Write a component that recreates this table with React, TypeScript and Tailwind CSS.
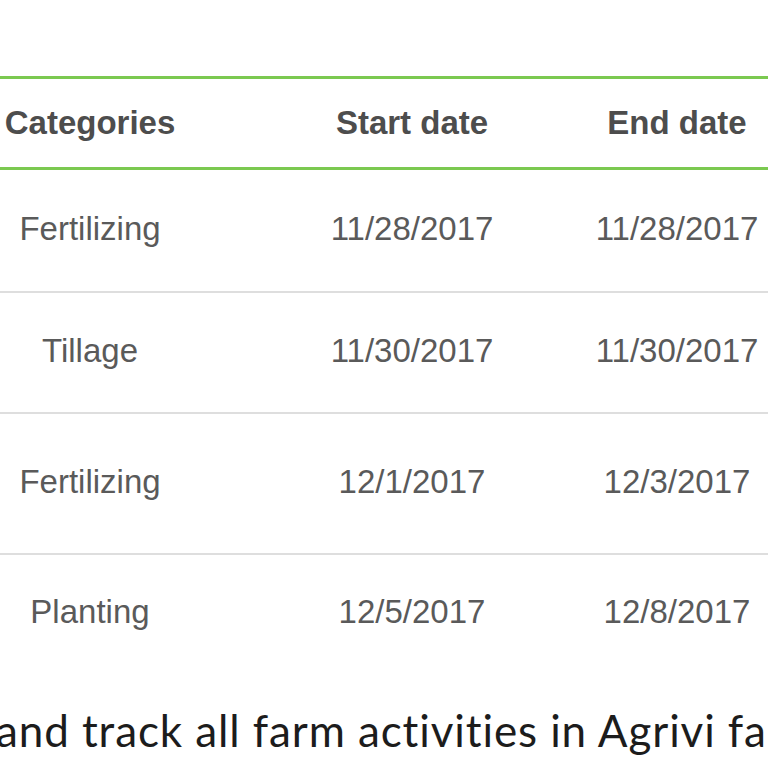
import React from 'react';

const rows = [
  { cat: 'Fertilizing', start: '11/28/2017', end: '11/28/2017', h: 'h-[123px]' },
  { cat: 'Tillage', start: '11/30/2017', end: '11/30/2017', h: 'h-[121px]' },
  { cat: 'Fertilizing', start: '12/1/2017', end: '12/3/2017', h: 'h-[141px]' },
  { cat: 'Planting', start: '12/5/2017', end: '12/8/2017', h: 'h-[118px]' },
];

const grid = 'grid grid-cols-[400px_244px_286px] ml-[-110px] w-[930px]';

export default function App() {
  return (
    <div className="w-[768px] h-[768px] overflow-hidden bg-white">
      <div className="pt-[76px] font-['Liberation_Sans',Arial,sans-serif] text-[33px]">
        {/* header */}
        <div className={`${grid} h-[94px] items-center border-y-[3px] border-[#7bc950] font-bold text-[#4d4d4d]`}>
          <div className="text-center">Categories</div>
          <div className="text-center">Start date</div>
          <div className="text-center">End date</div>
        </div>

        {rows.map((r, i) => (
          <div
            key={i}
            className={`${grid} ${r.h} items-center pb-[4px] text-[#5a5a5a] ${i < rows.length - 1 ? 'border-b-2 border-[#dedede]' : ''}`}
          >
            <div className="text-center">{r.cat}</div>
            <div className="text-center">{r.start}</div>
            <div className="text-center">{r.end}</div>
          </div>
        ))}
      </div>

      <p className="ml-[-4px] mt-[24px] whitespace-nowrap font-['Lato',sans-serif] text-[44px] leading-[1.5] tracking-[0.9px] text-[#1c1c1c] [font-variant-ligatures:none]">
        and track all farm activities in Agrivi fa
      </p>
    </div>
  );
}
